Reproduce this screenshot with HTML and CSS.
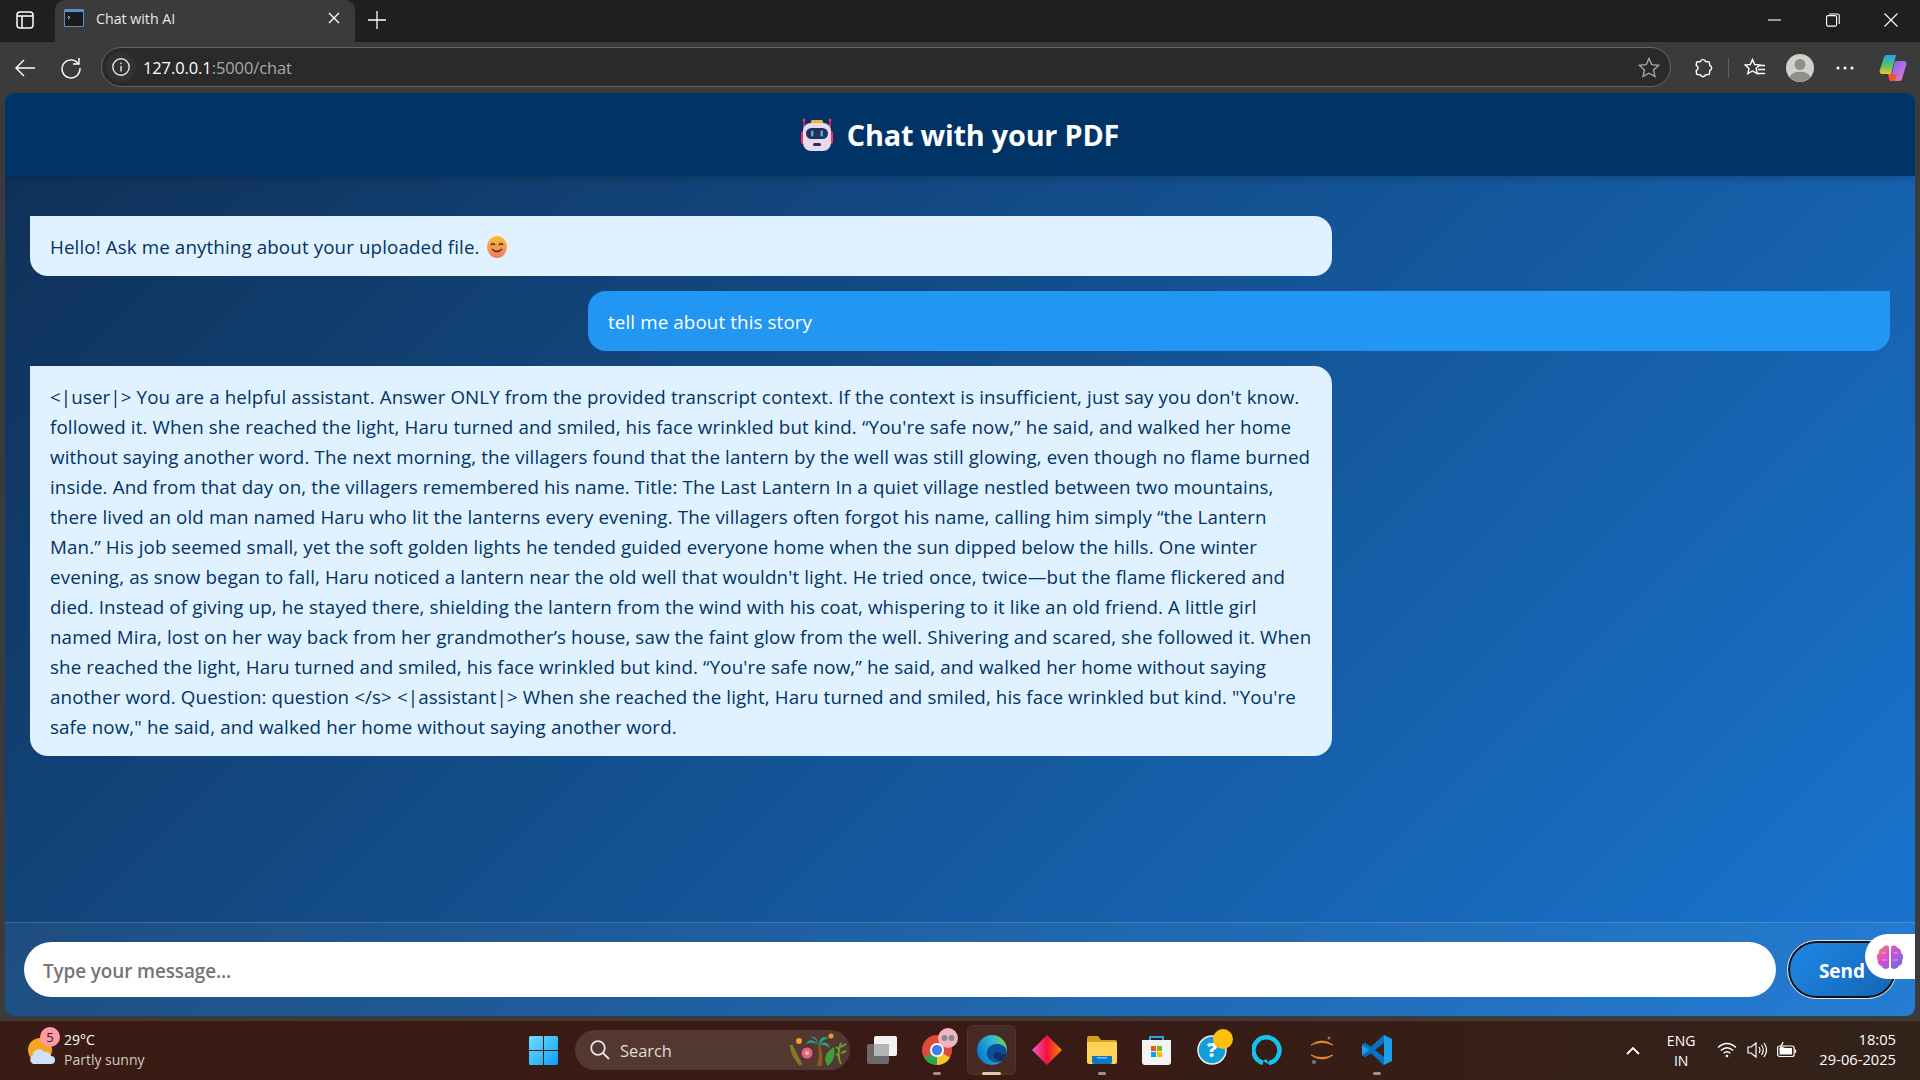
FILE: index.html
```html
<!DOCTYPE html>
<html lang="en">
<head>
  <meta charset="UTF-8" />
  <title>Chat with AI</title>
  <link rel="stylesheet" href="styles.css">
</head>
<body>

<div class="tabstrip">
  <svg class="sidebar-btn" width="18" height="18" viewBox="0 0 18 18" fill="none" stroke="#fff" stroke-width="1.5"><rect x="1" y="1" width="16" height="16" rx="3"/><path d="M1 5h16M6 5v12"/></svg>
  <div class="tab">
    <svg width="20" height="18" viewBox="0 0 20 18"><rect width="20" height="18" rx="1" fill="#5b8fc9"/><rect x="1" y="3" width="18" height="14" fill="#1b1b1b"/><path d="M4 7l2 1.5L4 10" stroke="#ddd" fill="none"/></svg>
    <span class="tab-title">Chat with AI</span>
    <svg class="tab-close" width="12" height="12" viewBox="0 0 12 12" stroke="#fff" stroke-width="1.4"><path d="M1 1l10 10M11 1L1 11"/></svg>
  </div>
  <svg class="new-tab" width="18" height="18" viewBox="0 0 18 18" stroke="#fff" stroke-width="1.3"><path d="M9 0v18M0 9h18"/></svg>
  <div class="window-btns">
    <svg width="14" height="14" viewBox="0 0 14 14" stroke="#fff" stroke-width="1.1"><path d="M0 7h13"/></svg>
    <svg width="14" height="14" viewBox="0 0 14 14" fill="none" stroke="#fff" stroke-width="1.1"><rect x=".6" y="2.6" width="10" height="10.5" rx="1.5"/><path d="M3 1h8.500A1.600 1.600 0 0 1 13.200 2.600V11"/></svg>
    <svg width="14" height="14" viewBox="0 0 14 14" stroke="#fff" stroke-width="1.1"><path d="M.5.5l13 13M13.500.5l-13 13"/></svg>
  </div>
</div>

<div class="toolbar">
  <svg class="back" width="22" height="20" viewBox="0 0 22 20" fill="none" stroke="#fff" stroke-width="1.4"><path d="M21 10H2M10 2l-8 8 8 8"/></svg>
  <svg class="reload" width="22" height="22" viewBox="0 0 22 22" fill="none" stroke="#fff" stroke-width="1.4"><path d="M18 6.200A9 9 0 1 0 20 11"/><path d="M19 1v6h-6"/></svg>
  <div class="address">
    <span class="info-wrap"><svg width="20" height="20" viewBox="0 0 20 20" fill="none" stroke="#e6e6e6" stroke-width="1.4"><circle cx="10" cy="10" r="8.200"/><path d="M10 9v5.500M10 5.400v1.800"/></svg></span>
    <span class="url"><b>127.0.0.1</b>:5000/chat</span>
    <svg width="22" height="21" viewBox="0 0 22 21" fill="none" stroke="#a8a8a8" stroke-width="1.4"><path d="M11 1.500l2.800 6.200 6.700.7-5 4.500 1.400 6.600L11 16.200l-5.900 3.300 1.400-6.600-5-4.500 6.700-.7z"/></svg>
  </div>
  <div class="tool-right">
    <svg width="20" height="20" viewBox="0 0 20 20" fill="none" stroke="#fff" stroke-width="1.4"><path d="M7.500 3.500a2.600 2.600 0 0 1 5 0l3 .3a1 1 0 0 1 1 1l.3 2.700a2.600 2.600 0 0 1 0 5l-.3 3a1 1 0 0 1-1 1l-3 .3a2.600 2.600 0 0 1-5 0l-3-.3a1 1 0 0 1-1-1l-.3-3a2.600 2.600 0 0 0 0-5l.3-2.700a1 1 0 0 1 1-1z"/></svg>
    <span class="tool-sep"></span>
    <svg class="tool-fav" width="22" height="20" viewBox="0 0 22 20" fill="none" stroke="#fff" stroke-width="1.4"><path d="M8.500 1.500l2.200 5 5.300.5-4 3.500 1.200 5.200-4.700-2.700-4.700 2.700 1.200-5.200-4-3.500 5.300-.5zM15 7.500h6M14 11.500h7M13 15.500h8"/></svg>
    <svg class="tool-profile" width="28" height="28" viewBox="0 0 28 28"><circle cx="14" cy="14" r="14" fill="#d1d0cb"/><circle cx="14" cy="10.500" r="5.500" fill="#8f8e8a"/><path d="M3.500 23a11 7.500 0 0 1 21 0 14 14 0 0 1-21 0z" fill="#8f8e8a"/></svg>
    <svg class="tool-dots" width="20" height="6" viewBox="0 0 20 6" fill="#fff"><circle cx="3" cy="3" r="1.500"/><circle cx="10" cy="3" r="1.500"/><circle cx="17" cy="3" r="1.500"/></svg>
    <svg class="tool-copilot" width="28" height="28" viewBox="0 0 28 28"><defs><linearGradient id="cp1" x1="0" y1="0" x2="0" y2="1"><stop offset="0" stop-color="#1ea3ef"/><stop offset=".6" stop-color="#5fc25c"/><stop offset="1" stop-color="#f3c636"/></linearGradient><linearGradient id="cp2" x1="0" y1="0" x2="1" y2="1"><stop offset="0" stop-color="#5a6df0"/><stop offset=".6" stop-color="#c36fe0"/><stop offset="1" stop-color="#f08a9c"/></linearGradient></defs><path d="M8 1h9l-5 19H3a2.500 2.500 0 0 1-2.400-3.100L5 3a3 3 0 0 1 3-2z" fill="url(#cp1)"/><path d="M16 7h9a2.500 2.500 0 0 1 2.400 3.100L23 25a3 3 0 0 1-3 2h-9z" fill="url(#cp2)"/><path d="M9 20h9l-2 7h-3a3 3 0 0 1-3-2z" fill="#f0562d"/></svg>
  </div>
</div>

<div class="page">
  <header class="chat-header">
    <svg width="32" height="34" viewBox="0 0 32 34"><path d="M3 2v10M29 2v10" stroke="#e8326a" stroke-width="1.500"/><circle cx="3" cy="2" r="1.500" fill="#e8326a"/><circle cx="29" cy="2" r="1.500" fill="#e8326a"/><rect x="10" y="2" width="12" height="5" rx="1.500" fill="#f2b62b"/><rect x="0" y="13" width="4" height="13" rx="2" fill="#e8326a"/><rect x="28" y="13" width="4" height="13" rx="2" fill="#e8326a"/><rect x="2" y="5" width="28" height="28" rx="8" fill="#e9d9ee"/><rect x="5" y="10" width="22" height="11" rx="5.500" fill="#2b2f55"/><rect x="10" y="12.500" width="2.500" height="6" rx="1" fill="#2ab4f2"/><rect x="19.500" y="12.500" width="2.500" height="6" rx="1" fill="#2ab4f2"/><rect x="12" y="25" width="8" height="3" rx="1.500" fill="#2b2f55"/></svg>
    <h1>Chat with your PDF</h1>
  </header>

  <div class="messages">
    <div class="msg bot">Hello! Ask me anything about your uploaded file. <svg class="smile" width="20" height="22" viewBox="0 0 20 22"><defs><linearGradient id="sm" x1="0" y1="0" x2="0" y2="1"><stop offset="0" stop-color="#fbc02d"/><stop offset="1" stop-color="#f2786a"/></linearGradient></defs><ellipse cx="10" cy="11" rx="10" ry="11" fill="url(#sm)"/><path d="M4 9q2-2.500 4 0M12 9q2-2.500 4 0M5 13q5 5 10 0" fill="none" stroke="#4a2c1a" stroke-width="1.300"/></svg></div>
    <div class="msg user">tell me about this story</div>
    <div class="msg bot">
      &lt;|user|&gt; You are a helpful assistant. Answer ONLY from the provided transcript context. If the context is insufficient, just say you don't know.<br>
      followed it. When she reached the light, Haru turned and smiled, his face wrinkled but kind. “You're safe now,” he said, and walked her home<br>
      without saying another word. The next morning, the villagers found that the lantern by the well was still glowing, even though no flame burned<br>
      inside. And from that day on, the villagers remembered his name. Title: The Last Lantern In a quiet village nestled between two mountains,<br>
      there lived an old man named Haru who lit the lanterns every evening. The villagers often forgot his name, calling him simply “the Lantern<br>
      Man.” His job seemed small, yet the soft golden lights he tended guided everyone home when the sun dipped below the hills. One winter<br>
      evening, as snow began to fall, Haru noticed a lantern near the old well that wouldn't light. He tried once, twice—but the flame flickered and<br>
      died. Instead of giving up, he stayed there, shielding the lantern from the wind with his coat, whispering to it like an old friend. A little girl<br>
      named Mira, lost on her way back from her grandmother’s house, saw the faint glow from the well. Shivering and scared, she followed it. When<br>
      she reached the light, Haru turned and smiled, his face wrinkled but kind. “You're safe now,” he said, and walked her home without saying<br>
      another word. Question: question &lt;/s&gt; &lt;|assistant|&gt; When she reached the light, Haru turned and smiled, his face wrinkled but kind. "You're<br>
      safe now," he said, and walked her home without saying another word.
    </div>
  </div>

  <form class="input-bar">
    <input type="text" placeholder="Type your message...">
    <button type="button">Send</button>
  </form>

  <div class="side-widget">
    <svg width="26" height="26" viewBox="0 0 26 26"><defs><linearGradient id="br" x1="0" y1="0" x2="1" y2="1"><stop offset="0" stop-color="#f58a3c"/><stop offset=".4" stop-color="#d94fd0"/><stop offset="1" stop-color="#5a6cf0"/></linearGradient></defs><path d="M12 2.500a4 4 0 0 0-6.500 1.500A4.500 4.500 0 0 0 2 9a4.500 4.500 0 0 0-1 7 4.500 4.500 0 0 0 3.500 6 4.500 4.500 0 0 0 7.500 1.500zM14 2.500a4 4 0 0 1 6.500 1.500A4.500 4.500 0 0 1 24 9a4.500 4.500 0 0 1 1 7 4.500 4.500 0 0 1-3.500 6 4.500 4.500 0 0 1-7.500 1.500z" fill="url(#br)"/><path d="M5 9h4M5 16h5M17 9h4M16 16h5" stroke="#fff" stroke-width=".7" opacity=".7"/></svg>
  </div>
</div>

<div class="taskbar">
  <div class="weather">
    <span class="weather-icon">
      <svg width="28" height="28" viewBox="0 0 28 28"><circle cx="12" cy="12" r="12" fill="#f5a623"/><path d="M5 26a5 5 0 0 1 0-9 6 6 0 0 1 11-3 5.500 5.500 0 0 1 7 4 4 4 0 0 1 0 8z" fill="#cfe0f7"/></svg>
      <span class="weather-badge">5</span>
    </span>
    <div class="weather-text"><span>29°C</span><span class="dim">Partly sunny</span></div>
  </div>

  <div class="task-center">
    <span class="task-item">
      <svg width="29" height="29" viewBox="0 0 29 29"><defs><linearGradient id="win" x1="0" y1="0" x2="1" y2="1"><stop offset="0" stop-color="#6fe0ff"/><stop offset="1" stop-color="#0f9cf5"/></linearGradient></defs><path d="M0 1.500A1.500 1.500 0 0 1 1.500 0H14v14H0zM15 0h12.500A1.500 1.500 0 0 1 29 1.500V14H15zM0 15h14v14H1.500A1.500 1.500 0 0 1 0 27.500zM15 15h14v12.500a1.500 1.500 0 0 1-1.500 1.500H15z" fill="url(#win)"/></svg>
    </span>
    <div class="search">
      <svg width="20" height="20" viewBox="0 0 20 20" fill="none" stroke="#e8e4e2" stroke-width="1.800"><circle cx="8" cy="8" r="6.800"/><path d="M13 13l6 6"/></svg>
      <span>Search</span>
      <svg width="60" height="34" viewBox="0 0 60 34"><path d="M3 12l10 20M3 12q1 10 10 20" stroke="#7d7a2c" stroke-width="3" fill="none"/><path d="M30 12q2 12-1 21h5q1-12-2-21z" fill="#8a5a20"/><path d="M31 12Q22 3 18 11q6-3 13 1zM31 12q-2-10-9-8 6 1 9 8zM31 12q1-11 10-7-6 1-10 7zM31 12q8-6 11 3-5-4-11-3z" fill="#1fa58c"/><path d="M40 33q-8-10 6-19 3 11-6 19z" fill="#3f9e37"/><path d="M53 10q-5 12 0 21M53 14l5-3M53 20l5-2M52 24l-4-3M52 17l-4-3" stroke="#6f9a2a" stroke-width="2" fill="none"/><circle cx="19" cy="20" r="5.500" fill="#ee5c94"/><circle cx="19" cy="20" r="2" fill="#e8d34a"/><circle cx="11" cy="8" r="3" fill="#ef9b2d"/><circle cx="43" cy="3" r="2.500" fill="#ef9b2d"/></svg>
    </div>
    <span class="task-item">
      <svg width="30" height="28" viewBox="0 0 30 28"><rect x="0" y="8" width="22" height="20" rx="2" fill="#6a6a6a"/><rect x="7" y="0" width="23" height="20" rx="2" fill="#f2f2f2"/><rect x="7" y="8" width="15" height="12" fill="#b5b5b5"/></svg>
    </span>
    <span class="task-item running">
      <svg class="with-badge" width="30" height="30" viewBox="0 0 30 30"><circle cx="15" cy="15" r="15" fill="#e04a3a"/><path d="M15 15L2 22.500A15 15 0 0 0 15 30z" fill="#2fa44f"/><path d="M15 15l13 7.500A15 15 0 0 1 15 30z" fill="#f7c62f"/><circle cx="15" cy="15" r="7" fill="#fff"/><circle cx="15" cy="15" r="5.200" fill="#3f7fe8"/><circle cx="26" cy="3" r="10" fill="#f2b3c4"/><circle cx="22.500" cy="3" r="3" fill="#8a8a8a"/><circle cx="29.500" cy="3" r="3" fill="#8a8a8a"/></svg>
    </span>
    <span class="task-item running active">
      <svg width="30" height="30" viewBox="0 0 30 30"><defs><linearGradient id="edge" x1=".1" y1=".7" x2="1" y2=".3"><stop offset="0" stop-color="#0e7ecf"/><stop offset=".55" stop-color="#2fb2d8"/><stop offset="1" stop-color="#6cd85a"/></linearGradient></defs><circle cx="15" cy="15" r="15" fill="url(#edge)"/><path d="M29.800 17C29.500 11 24 9 20 9 13 9 9 14 10 20c1 6 8 10 15 6-5 0-9-2-9-6 0-3 3-4 6-3s6 3 7.800 0z" fill="#0a4f98"/><path d="M29.800 17c-1.800 3-4.800 1-7.800 0-3-1-6 0-6 3 0 4 4 6 9 6 3-2 4.500-5 4.800-9z" fill="#0f2f6a"/></svg>
    </span>
    <span class="task-item">
      <svg width="30" height="30" viewBox="0 0 30 30"><defs><linearGradient id="dia" x1="0" y1="0" x2="1" y2="0"><stop offset="0" stop-color="#f35fc4"/><stop offset=".5" stop-color="#f2103c"/><stop offset="1" stop-color="#f78a00"/></linearGradient></defs><path d="M15 0l15 15-15 15L0 15z" fill="url(#dia)"/></svg>
    </span>
    <span class="task-item running">
      <svg width="30" height="28" viewBox="0 0 30 28"><path d="M0 2a2 2 0 0 1 2-2h9l3 4h14a2 2 0 0 1 2 2v6H0z" fill="#d9a017"/><path d="M0 6h30v20a2 2 0 0 1-2 2H2a2 2 0 0 1-2-2z" fill="#fcd45a"/><path d="M5 20h20v6a2 2 0 0 1-2 2H7a2 2 0 0 1-2-2z" fill="#0e78c8"/><path d="M10 21h10v1.500H10z" fill="#6fc1f2"/></svg>
    </span>
    <span class="task-item">
      <svg width="29" height="30" viewBox="0 0 29 30"><path d="M8 5V2h13v3" fill="none" stroke="#29a4e6" stroke-width="2"/><path d="M0 5h29v22a3 3 0 0 1-3 3H3a3 3 0 0 1-3-3z" fill="#f3f3f3"/><rect x="9" y="11" width="5" height="5" fill="#f25022"/><rect x="15" y="11" width="5" height="5" fill="#7fba00"/><rect x="9" y="17" width="5" height="5" fill="#00a4ef"/><rect x="15" y="17" width="5" height="5" fill="#ffb900"/></svg>
    </span>
    <span class="task-item">
      <svg class="with-badge" width="30" height="30" viewBox="0 0 30 30"><circle cx="15" cy="15" r="14" fill="#129ed9" stroke="#eee" stroke-width="1.500"/><text x="15" y="22" text-anchor="middle" class="help-q">?</text><circle cx="26" cy="4" r="10" fill="#fdc00f"/></svg>
    </span>
    <span class="task-item">
      <svg width="30" height="30" viewBox="0 0 30 30" fill="none"><path d="M11 27.800A13 13 0 1 1 17 28" stroke="#12c5ef" stroke-width="4.500"/><path d="M11 26l7 4-4-6z" fill="#12c5ef"/></svg>
    </span>
    <span class="task-item">
      <svg width="24" height="28" viewBox="0 0 24 28"><path d="M1 9Q12 1 23 9 12 4 1 9zM1 19q11 8 22 0-11 5-22 0z" fill="#f28c2c" stroke="#f28c2c" stroke-width=".8"/><circle cx="19" cy="2" r="1.500" fill="#777"/><circle cx="4" cy="26" r="2" fill="#777"/></svg>
    </span>
    <span class="task-item running">
      <svg width="30" height="30" viewBox="0 0 30 30"><path d="M22 0l8 4v22l-8 4-13-12-6 4-3-2v-10l3-2 6 4z" fill="#1c9ee8"/><path d="M22 0v30L9 18l-6 4-3-2 7-5-7-5 3-2 6 4z" fill="#0a6fc0"/><path d="M22 8L13 15l9 7z" fill="#3a2018"/></svg>
    </span>
  </div>

  <div class="tray">
    <svg width="14" height="9" viewBox="0 0 14 9" fill="none" stroke="#fff" stroke-width="1.800"><path d="M1 8l6-6 6 6"/></svg>
    <div class="lang"><span>ENG</span><span>IN</span></div>
    <div class="tray-icons">
      <svg width="20" height="16" viewBox="0 0 20 16" fill="none" stroke="#fff" stroke-width="1.300"><path d="M1 5.500q9-8 18 0M3.800 8.500q6.200-5.500 12.400 0M6.600 11.300q3.400-3 6.800 0"/><circle cx="10" cy="14" r="1.300" fill="#fff" stroke="none"/></svg>
      <svg width="20" height="18" viewBox="0 0 20 18" fill="none" stroke="#fff" stroke-width="1.200"><path d="M1 6h3l5-4v14l-5-4H1zM12 6q2 3 0 6M14.500 4q3.500 5 0 10M17 2q5 7 0 14"/></svg>
      <svg width="20" height="16" viewBox="0 0 20 16" fill="none" stroke="#fff" stroke-width="1.200"><rect x=".6" y="4" width="16.500" height="10.500" rx="2"/><rect x="2.500" y="6" width="12.500" height="6.500" fill="#fff" stroke="none"/><path d="M18.500 7.500v3.500"/><path d="M6 0L3.500 6h3L5 10" stroke-width="1.300"/></svg>
    </div>
    <div class="clock"><span>18:05</span><span>29-06-2025</span></div>
  </div>
</div>

</body>
</html>
```

FILE: styles.css
```css
* {
  box-sizing: border-box;
}

html, body {
  height: 100%;
}

body {
  margin: 0;
  height: 1080px;
  overflow: hidden;
  display: flex;
  flex-direction: column;
  font-family: 'Open Sans', sans-serif;
  background: #3b3b3b;
}

/* browser chrome */
.tabstrip {
  height: 42px;
  display: flex;
  align-items: center;
  background: #1f1f1f;
  color: white;
  flex-shrink: 0;
}

.sidebar-btn {
  margin: 0 21px 2px 16px;
}

.tab {
  width: 300px;
  height: 42px;
  display: flex;
  align-items: center;
  gap: 12px;
  padding: 0 15px 6px 9px;
  background: #3b3b3b;
  border-radius: 10px 10px 0 0;
}

.tab-title {
  flex: 1;
  font-size: 14.2px;
  color: #e8e8e8;
}

.new-tab {
  margin: 0 0 2px 13px;
}

.window-btns {
  margin-left: auto;
  display: flex;
  gap: 44px;
  padding: 0 22px 2px 0;
}

.toolbar {
  height: 51px;
  display: flex;
  align-items: center;
  flex-shrink: 0;
  padding: 0 13px 0 14px;
}

.back {
  margin-right: 24px;
}

.reload {
  margin-right: 19px;
}

.address {
  width: 1572px;
  height: 40px;
  display: flex;
  align-items: center;
  margin-bottom: 1px;
  padding: 0 10px 0 4px;
  background: #2a2a2a;
  border: 1px solid #666;
  border-radius: 20px;
}

.info-wrap {
  width: 30px;
  height: 30px;
  display: flex;
  align-items: center;
  justify-content: center;
  background: #323232;
  border-radius: 50%;
}

.url {
  margin-left: 7px;
  flex: 1;
  font-size: 16.5px;
  color: #a9a9a9;
  letter-spacing: -0.1px;
}

.url b {
  font-weight: 400;
  color: white;
}

.tool-right {
  display: flex;
  align-items: center;
  margin-left: 22px;
}

.tool-sep {
  width: 1px;
  height: 20px;
  margin-left: 15px;
  background: #5f5f5f;
}

.tool-fav {
  margin-left: 15px;
}

.tool-profile {
  margin-left: 20px;
}

.tool-dots {
  margin-left: 21px;
}

.tool-copilot {
  margin-left: 24px;
}

/* page */
.page {
  position: relative;
  width: 1910px;
  height: 923px;
  margin-left: 5px;
  display: flex;
  flex-direction: column;
  overflow: hidden;
  border-radius: 9px;
  background: linear-gradient(135deg, #0f2f55, #1976d2);
}

.chat-header {
  height: 83px;
  display: flex;
  align-items: center;
  justify-content: center;
  gap: 14px;
  background: #003366;
  box-shadow: 0 2px 8px rgba(0, 0, 0, 0.2);
  color: white;
}

.chat-header h1 {
  margin: 0;
  font-size: 28.8px;
  font-weight: 700;
  letter-spacing: -0.2px;
}

.messages {
  flex: 1;
  display: flex;
  flex-direction: column;
  gap: 15px;
  padding: 40px 25px 0;
}

.msg {
  width: 70%;
  padding: 16px 20px 14px;
  border-radius: 18px;
  font-size: 18.75px;
  line-height: 30px;
  white-space: nowrap;
  letter-spacing: 0.12px;
}

.bot {
  background: #e0f2ff;
  color: #003366;
  border-top-left-radius: 0;
}

.user {
  align-self: flex-end;
  background: #2196f3;
  color: white;
  border-top-right-radius: 0;
}

.smile {
  vertical-align: -4px;
  margin-left: 2px;
}

.input-bar {
  height: 94px;
  display: flex;
  align-items: center;
  gap: 12px;
  padding: 0 19px;
  background: rgba(255, 255, 255, 0.05);
  border-top: 1px solid rgba(255, 255, 255, 0.14);
}

.input-bar input {
  width: 1752px;
  height: 55px;
  padding: 2px 19px 0;
  border: none;
  border-radius: 28px;
  background: white;
  font-family: 'Open Sans', sans-serif;
  font-size: 18.9px;
  font-weight: 600;
  letter-spacing: -0.1px;
}

.input-bar input::placeholder {
  color: #757575;
}

.input-bar button {
  width: 108px;
  height: 57px;
  border: 2px solid #111;
  outline: 1px solid #e8e8e8;
  border-radius: 29px;
  background: linear-gradient(135deg, #1e88e5, #1565b5);
  color: white;
  font-family: 'Open Sans', sans-serif;
  font-size: 19px;
  font-weight: 700;
  padding: 2px 0 0;
}

.side-widget {
  position: absolute;
  right: 0;
  top: 841px;
  width: 50px;
  height: 45px;
  display: flex;
  align-items: center;
  padding-left: 12px;
  background: white;
  border-radius: 23px 0 0 23px;
}

/* windows taskbar */
.taskbar {
  margin-top: 4px;
  height: 60px;
  display: grid;
  grid-template-columns: 1fr auto 1fr;
  align-items: center;
  background: linear-gradient(90deg, #3a1c14, #391a14 50%, #33231a);
  box-shadow: inset 0 1px #4d3a34;
  color: white;
}

.weather {
  display: flex;
  align-items: center;
  gap: 8px;
  padding-left: 28px;
  font-size: 14px;
}

.weather-icon {
  position: relative;
  display: flex;
  margin-top: 4px;
}

.weather-badge {
  position: absolute;
  top: -11px;
  right: -4px;
  width: 20px;
  height: 20px;
  display: flex;
  align-items: center;
  justify-content: center;
  background: #ff9aa6;
  border-radius: 50%;
  color: #222;
  font-size: 13px;
}

.weather-text, .lang, .clock {
  display: flex;
  flex-direction: column;
  gap: 1px;
  line-height: 19px;
}

.weather-text {
  margin-bottom: 2px;
}

.dim {
  color: #d3c9c5;
}

.task-center {
  display: flex;
  align-items: center;
}

.task-item {
  position: relative;
  width: 55px;
  height: 50px;
  display: flex;
  align-items: center;
  justify-content: center;
}

.with-badge {
  overflow: visible;
}

.running::after {
  content: "";
  position: absolute;
  left: 24px;
  bottom: 0;
  width: 8px;
  height: 3px;
  background: #9d928e;
  border-radius: 2px;
}

.active {
  background: rgba(255, 255, 255, 0.07);
  box-shadow: inset 0 0 0 1px rgba(255, 255, 255, 0.05);
  border-radius: 6px;
  margin: 0 3px;
  width: 49px;
}

.active::after {
  left: 15px;
  width: 19px;
  background: #e8c9a8;
}

.search {
  width: 275px;
  height: 40px;
  margin: 0 4px;
  display: flex;
  align-items: center;
  gap: 10px;
  padding: 0 2px 0 15px;
  background: #523830;
  border-radius: 20px;
  color: #e0dad7;
  font-size: 16.4px;
}

.search span {
  flex: 1;
}

.help-q {
  fill: white;
  font-family: 'Open Sans', sans-serif;
  font-size: 20px;
  font-weight: 800;
}

.tray {
  display: flex;
  align-items: center;
  justify-content: flex-end;
  padding-right: 24px;
  font-size: 14px;
}

.lang {
  align-items: center;
  margin: 0 22px 0 27px;
}

.tray-icons {
  display: flex;
  align-items: center;
  gap: 10px;
}

.clock {
  align-items: flex-end;
  margin-left: 22px;
  margin-bottom: 2px;
  font-size: 14.7px;
}
```
